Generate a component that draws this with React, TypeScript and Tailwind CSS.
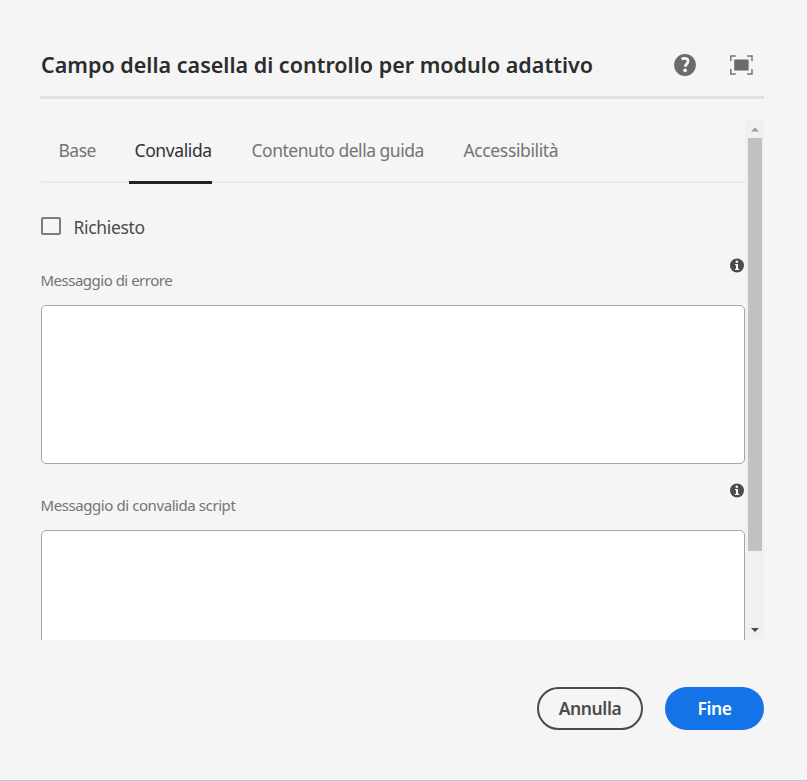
const tabs = [
  { label: "Base", cls: "w-[37px] text-[#747474] tracking-[-0.5px]" },
  { label: "Convalida", cls: "w-[77px] text-[#323232] tracking-[-0.4px]" },
  { label: "Contenuto della guida", cls: "w-[173px] text-[#747474] tracking-[-0.48px]" },
  { label: "Accessibilità", cls: "w-[96px] text-[#747474] tracking-[-0.37px]" },
];

function HelpIcon() {
  return (
    <svg width="22" height="22" viewBox="0 0 22 22">
      <circle cx="11" cy="11" r="10.9" fill="#6b6b6b" />
      <path d="M7.6 5.2C9.4 4 14 3.7 14 7.3c0 2.6-2.7 2.7-2.7 5.4" fill="none" stroke="#f5f5f5" strokeWidth="2.8" />
      <circle cx="11.1" cy="16.3" r="1.9" fill="#f5f5f5" />
    </svg>
  );
}

function FullScreenIcon() {
  return (
    <svg width="23" height="20" viewBox="0 0 23 20">
      <rect x="4.2" y="4.5" width="14.4" height="11" fill="#6b6b6b" />
      <path d="M.8 6V1h5M17 1h5v5M22 14v5h-5M5.8 19h-5v-5" fill="none" stroke="#747474" strokeWidth="1.5" />
    </svg>
  );
}

function InfoIcon() {
  return (
    <svg width="15" height="15" viewBox="0 0 15 15" className="shrink-0">
      <circle cx="7" cy="7.5" r="7" fill="#4b4b4b" />
      <circle cx="6.8" cy="3.7" r="1.3" fill="#f5f5f5" />
      <path d="M5 6h3v4.7h1.2v1.4H4.9v-1.4H6V7.2H5z" fill="#f5f5f5" />
    </svg>
  );
}

function Field({ label, labelCls }: { label: string; labelCls: string }) {
  return (
    <div className="mb-[18px]">
      <div className="flex h-[48px] justify-between">
        <label className={"mt-[11px] text-[15px] leading-6 whitespace-nowrap text-[#747474] " + labelCls}>{label}</label>
        <div className="mt-px">
          <InfoIcon />
        </div>
      </div>
      <div className="h-[159px] rounded-[5px] border border-[#a6a6a6] bg-white" />
    </div>
  );
}

export default function App() {
  return (
    <div className="flex h-[781px] w-[807px] flex-col border-b border-[#c8c8c8] bg-[#f5f5f5] pr-[43px] pl-[40px] font-['Noto_Sans',sans-serif]">
      <header className="flex h-[99px] shrink-0 items-center border-b-[3px] border-[#e1e1e1] pt-[34px]">
        <h1 className="flex-1 pl-px text-[21.5px] leading-8 font-semibold tracking-[0.01px] whitespace-nowrap text-[#2c2c2c]">
          Campo della casella di controllo per modulo adattivo
        </h1>
        <div className="mr-[11px] flex items-center gap-[34px]">
          <HelpIcon />
          <FullScreenIcon />
        </div>
      </header>

      <div className="mt-[21px] flex h-[520px] shrink-0 overflow-hidden pl-[0.5px]">
        <main className="w-[704.5px]">
          <nav className="flex h-[64px] text-[17.5px] leading-[61px]">
            {tabs.map((t, i) => (
              <div
                key={t.label}
                className={
                  i === 1
                    ? "mr-[40px] h-[64px] border-b-[3px] border-[#222222] pl-[6px]"
                    : i === 0
                      ? "mr-[33px] h-[62px] pl-[18px]"
                      : "mr-[39px] h-[62px]"
                }
              >
                <div className={"whitespace-nowrap " + t.cls}>{t.label}</div>
              </div>
            ))}
          </nav>
          <div className="-mt-[3px] flex h-[2px]">
            <div className="w-[88px] bg-[#e8e8e8]" />
            <div className="w-[83px]" />
            <div className="flex-1 bg-[#e8e8e8]" />
          </div>
          <label className="mt-[31px] flex h-[26px] items-center gap-[13px]">
            <span className="mb-[3px] h-[18px] w-[20px] rounded-[2px] border-2 border-[#7b7b7b]" />
            <span className="text-[17.5px] leading-6 tracking-[-0.35px] text-[#4b4b4b]">Richiesto</span>
          </label>
          <div className="mt-[17px]">
            <Field label="Messaggio di errore" labelCls="tracking-[-0.5px]" />
            <Field label="Messaggio di convalida script" labelCls="tracking-[-0.42px]" />
          </div>
        </main>
        <div className="flex h-[519px] w-[19px] flex-col items-center bg-[#f0f0f0] pl-px">
          <svg width="14" height="18" viewBox="0 0 14 18" className="shrink-0">
            <path d="M3 11.5L7 7.5l4 4z" fill="#9c9c9c" />
          </svg>
          <div className="h-[413px] w-[14px] shrink-0 bg-[#c1c1c1]" />
          <svg width="14" height="18" viewBox="0 0 14 18" className="mt-[69px] shrink-0">
            <path d="M3 8l4 4 4-4z" fill="#4b4b4b" />
          </svg>
        </div>
      </div>

      <footer className="mt-[47px] flex justify-end gap-[22px] text-[17.5px] font-semibold">
        <button className="h-[43px] w-[106px] rounded-full border-2 border-[#4b4b4b] text-[#4b4b4b]">
          <span className="tracking-[-0.4px]">Annulla</span>
        </button>
        <button className="h-[43px] w-[99px] rounded-full bg-[#1473e6] text-white">
          <span className="tracking-[-0.4px]">Fine</span>
        </button>
      </footer>
    </div>
  );
}
